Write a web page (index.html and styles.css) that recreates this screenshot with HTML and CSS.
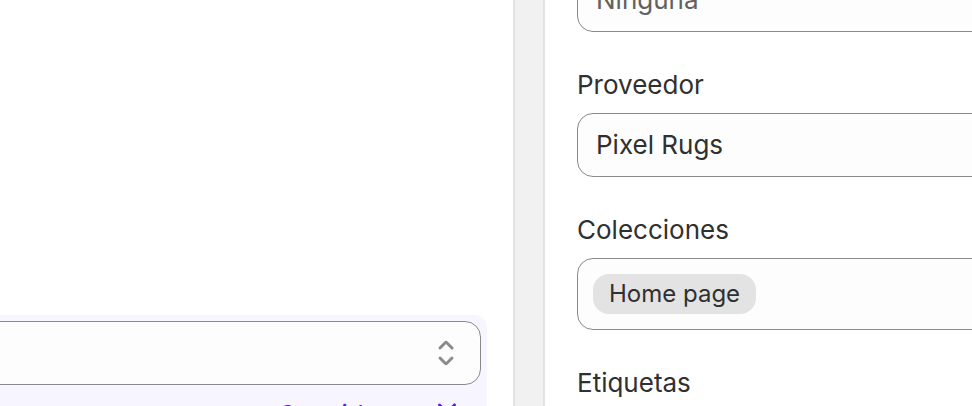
FILE: index.html
```html
<!DOCTYPE html>
<html lang="es">
<head>
  <meta charset="UTF-8">
  <meta name="viewport" content="width=device-width, initial-scale=1.0">
  <title>Producto - Organización</title>
  <link rel="stylesheet" href="styles.css">
</head>
<body>
  <div class="page">
    <section class="card card-main">
      <div class="card-spacer"></div>
      <div class="category">
        <div class="select">
          <svg class="icon" viewBox="0 0 20 20" width="40" height="40">
            <path d="M10.884 4.323a1.25 1.25 0 0 0-1.768 0l-2.646 2.647a.75.75 0 0 0 1.06 1.06l2.47-2.47 2.47 2.47a.75.75 0 1 0 1.06-1.06l-2.646-2.647Z"/>
            <path d="m13.53 13.03-2.646 2.647a1.25 1.25 0 0 1-1.768 0l-2.646-2.647a.75.75 0 0 1 1.06-1.06l2.47 2.47 2.47-2.47a.75.75 0 0 1 1.06 1.06Z"/>
          </svg>
        </div>
        <div class="suggest">
          <span>Considerar</span>
          <svg class="icon" viewBox="0 0 20 20" width="40" height="40">
            <path d="M5.72 8.47a.75.75 0 0 1 1.06 0l3.22 3.22 3.22-3.22a.75.75 0 1 1 1.06 1.06l-3.75 3.75a.75.75 0 0 1-1.06 0l-3.75-3.75a.75.75 0 0 1 0-1.06Z"/>
          </svg>
        </div>
      </div>
    </section>

    <aside class="card card-side">
      <div class="field">
        <div class="input input-muted">Ninguna</div>
      </div>
      <div class="field">
        <label>Proveedor</label>
        <div class="input">Pixel Rugs</div>
      </div>
      <div class="field">
        <label>Colecciones</label>
        <div class="input input-tags">
          <span class="tag">Home page</span>
        </div>
      </div>
      <div class="field">
        <label>Etiquetas</label>
        <div class="input"></div>
      </div>
    </aside>
  </div>
</body>
</html>
```

FILE: styles.css
```css
body {
  margin: 0;
  overflow: hidden;
  background-color: #f1f1f1;
  font-family: Inter, "Noto Sans", sans-serif;
  font-size: 26px;
  line-height: 40px;
  color: #303030;
}
.page {
  display: flex;
  gap: 28px;
  margin: -32px 0 0 -120px;
}
.card {
  background-color: #fff;
  flex: none;
}
.card-main {
  width: 569px;
  padding: 0 32px;
  border-right: 2px solid #e3e3e3;
}
.card-spacer {
  height: 347px;
}
.card-side {
  width: 600px;
  padding: 0 32px 40px;
  border-left: 2px solid #e3e3e3;
  display: flex;
  flex-direction: column;
  gap: 33px;
}

/* categoria sugerida */
.category {
  margin: 0 -6px;
  padding: 6px 6px 20px;
  background-color: #f7f5ff;
  border-radius: 12px 12px 0 0;
}
.select {
  height: 64px;
  box-sizing: border-box;
  border: 1px solid #8a8a8a;
  border-radius: 16px;
  background-color: #fdfdfd;
  display: flex;
  align-items: center;
  justify-content: flex-end;
  padding: 0 14px;
}
.icon {
  fill: #8a8a8a;
  flex: none;
}
.suggest {
  display: flex;
  align-items: flex-start;
  justify-content: flex-end;
  gap: 14px;
  margin-top: 10px;
  padding-right: 14px;
  color: #5d1fe4;
}
.suggest .icon {
  fill: #5d1fe4;
  margin-top: -8px;
}

/* campos de organizacion */
.field {
  display: flex;
  flex-direction: column;
  gap: 8px;
}
.field label {
  display: block;
}
.input {
  height: 64px;
  box-sizing: border-box;
  border: 1px solid #8a8a8a;
  border-radius: 16px;
  background-color: #fdfdfd;
  padding: 0 18px;
  display: flex;
  align-items: center;
}
.input-muted {
  color: #616161;
}
.input-tags {
  height: auto;
  padding: 15px;
}
.tag {
  display: inline-flex;
  align-items: center;
  height: 40px;
  padding: 0 16px;
  border-radius: 16px;
  background-color: #e3e3e3;
  font-size: 24px;
}
```
